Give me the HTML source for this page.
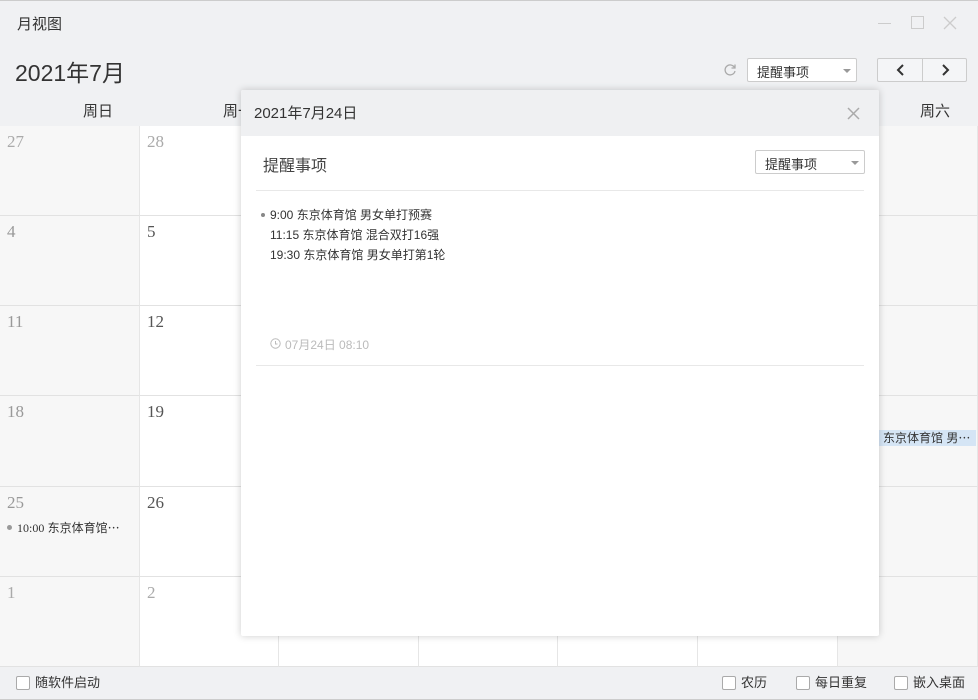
<!DOCTYPE html>
<html><head><meta charset="utf-8"><style>
*{margin:0;padding:0;box-sizing:border-box}
body{width:978px;height:700px;overflow:hidden;background:#f0f1f3;font-family:"Liberation Sans","Noto Sans CJK SC",sans-serif;position:relative;color:#333}
.abs{position:absolute}
.cell{position:absolute;border-bottom:1px solid #e2e2e2;border-right:1px solid #e6e6e6}
.num{position:absolute;left:7px;top:6px;font-family:"Liberation Serif","Noto Serif CJK SC",serif;font-size:17px;color:#555}
.g{color:#aaa}
.cb{position:absolute;width:14px;height:14px;border:1px solid #aaa;border-radius:2px;background:#fff}
.ft{position:absolute;font-size:13px;color:#333;top:675px;line-height:16px}
</style></head><body>
<div class="abs" style="left:0;top:0;width:978px;height:1px;background:#ccc"></div>
<div class="abs" style="left:17px;top:13px;font-size:15px;color:#333">月视图</div>
<div class="abs" style="left:878px;top:23px;width:13px;height:1px;background:#ccc"></div>
<div class="abs" style="left:911px;top:16px;width:13px;height:13px;border:1px solid #ccc"></div>
<svg class="abs" style="left:943px;top:16px" width="14" height="14"><path d="M1 1l12 12M13 1L1 13" stroke="#ccc" stroke-width="1.3"/></svg>
<div class="abs" style="left:15px;top:54px;font-size:23px;color:#333">2021年7月</div>
<svg class="abs" style="left:723px;top:63px" width="14" height="14" viewBox="0 0 14 14"><path d="M11.5 4.5A5 5 0 1 0 12 8" fill="none" stroke="#aaa" stroke-width="1.3"/><path d="M12 1.5V5H8.5" fill="none" stroke="#aaa" stroke-width="1.3"/></svg>
<div class="abs" style="left:747px;top:58px;width:110px;height:24px;background:#fff;border:1px solid #ccc;border-radius:2px;font-size:13px;padding:3px 9px">提醒事项<span style="position:absolute;right:5px;top:10px;border:4px solid transparent;border-top-color:#999;border-bottom:0"></span></div>
<div class="abs" style="left:877px;top:58px;width:90px;height:24px;background:#f4f5f7;border:1px solid #ccc;border-radius:2px"></div>
<div class="abs" style="left:922px;top:59px;width:1px;height:22px;background:#ccc"></div>
<svg class="abs" style="left:895px;top:63px" width="12" height="14"><path d="M8 2L3 7l5 5" fill="none" stroke="#333" stroke-width="2"/></svg>
<svg class="abs" style="left:939px;top:63px" width="12" height="14"><path d="M4 2l5 5-5 5" fill="none" stroke="#333" stroke-width="2"/></svg>
<div class="abs" style="left:83px;top:100px;font-size:15px">周日</div>
<div class="abs" style="left:223px;top:100px;font-size:15px">周一</div>
<div class="abs" style="left:920px;top:100px;font-size:15px">周六</div>
<div id="grid"></div>
<script>
var xs=[0,140,279,419,558,698,838,978],ys=[126,216,306,396,487,577,667];
var nums=[[27,28,29,30,1,2,3],[4,5,6,7,8,9,10],[11,12,13,14,15,16,17],[18,19,20,21,22,23,24],[25,26,27,28,29,30,31],[1,2,3,4,5,6,7]];
var h='';
for(var r=0;r<6;r++)for(var c=0;c<7;c++){
var bg=(c==0||c==6)?'#f7f7f7':'#fff';
var gray=(r==0&&c<4)||(r==5);
h+='<div class="cell" style="left:'+xs[c]+'px;top:'+ys[r]+'px;width:'+(xs[c+1]-xs[c])+'px;height:'+(ys[r+1]-ys[r])+'px;background:'+bg+'"><span class="num '+(c==0||gray?'g':'')+'" style="'+(c==0&&!gray?'color:#999':'')+'">'+nums[r][c]+'</span></div>';}
document.getElementById('grid').innerHTML=h;
</script>
<div class="abs" style="left:7px;top:525px;width:5px;height:5px;border-radius:50%;background:#999"></div>
<div class="abs" style="left:17px;top:519px;font-size:12px;color:#333"><span style="font-family:'Liberation Serif',serif">10:00</span> 东京体育馆⋯</div>
<div class="abs" style="left:879px;top:430px;width:97px;height:16px;background:#d5e5f5;font-size:12px;padding:0 4px;line-height:16px;white-space:nowrap;overflow:hidden">东京体育馆 男⋯</div>
<div class="abs" style="left:0;top:667px;width:978px;height:33px;background:#f0f1f3;border-bottom:1px solid #ccc"></div>
<div class="cb" style="left:16px;top:676px"></div><div class="ft" style="left:35px">随软件启动</div>
<div class="cb" style="left:722px;top:676px"></div><div class="ft" style="left:741px">农历</div>
<div class="cb" style="left:796px;top:676px"></div><div class="ft" style="left:815px">每日重复</div>
<div class="cb" style="left:894px;top:676px"></div><div class="ft" style="left:913px">嵌入桌面</div>
<div class="abs" style="left:241px;top:90px;width:638px;height:546px;background:#fff;box-shadow:0 0 8px rgba(0,0,0,.2);border-radius:2px;overflow:hidden">
<div style="height:46px;background:#eff0f2;font-size:15px;padding:12px 13px">2021年7月24日</div>
<svg class="abs" style="left:606px;top:17px" width="13" height="13"><path d="M1 1l11 11M12 1L1 12" stroke="#aaa" stroke-width="1.5"/></svg>
<div class="abs" style="left:22px;top:62px;font-size:16px;color:#444">提醒事项</div>
<div class="abs" style="left:514px;top:60px;width:110px;height:24px;border:1px solid #ccc;border-radius:2px;font-size:13px;padding:3px 9px">提醒事项<span style="position:absolute;right:5px;top:10px;border:4px solid transparent;border-top-color:#999;border-bottom:0"></span></div>
<div class="abs" style="left:15px;top:100px;width:608px;height:1px;background:#e8e8e8"></div>
<div class="abs" style="left:20px;top:123px;width:4px;height:4px;border-radius:50%;background:#888"></div>
<div class="abs" style="left:29px;top:115px;font-size:12px;line-height:20px;color:#333">9:00 东京体育馆 男女单打预赛<br>11:15 东京体育馆 混合双打16强<br>19:30 东京体育馆 男女单打第1轮</div>
<svg class="abs" style="left:29px;top:248px" width="11" height="11"><circle cx="5.5" cy="5.5" r="4.7" fill="none" stroke="#bbb"/><path d="M5.5 3v3h2" fill="none" stroke="#bbb"/></svg>
<div class="abs" style="left:44px;top:246px;font-size:12px;color:#bbb">07月24日 08:10</div>
<div class="abs" style="left:15px;top:275px;width:608px;height:1px;background:#e8e8e8"></div>
</div>
</body></html>
